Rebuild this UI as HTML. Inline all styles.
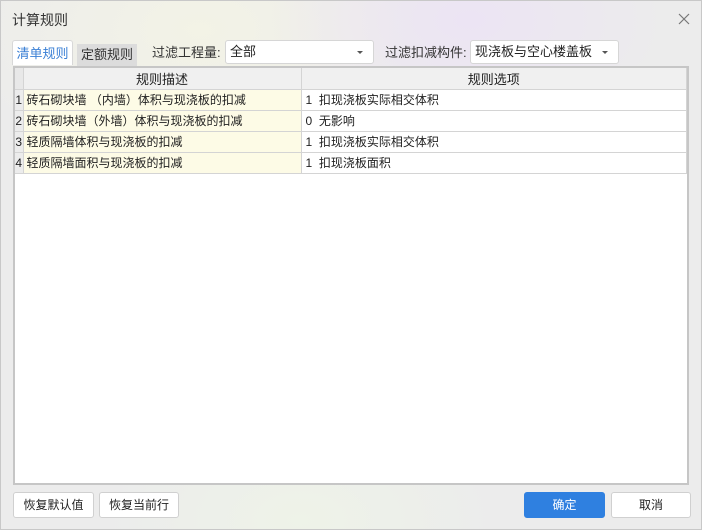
<!DOCTYPE html>
<html><head><meta charset="utf-8"><style>
*{box-sizing:border-box;margin:0;padding:0}
body{width:702px;height:530px;overflow:hidden;font-family:"Liberation Sans","Noto Sans CJK SC",sans-serif;font-size:12px;color:#222;position:relative;
background:radial-gradient(ellipse 200px 120px at 470px 20px,#ece4f4,transparent),radial-gradient(ellipse 250px 150px at 200px 30px,#f3f3e6,transparent),radial-gradient(ellipse 200px 120px at 300px 520px,#eef3e8,transparent),#ececec;border:1px solid #c8c8c8}
.abs{position:absolute}
.title{left:11px;top:9px;font-size:14px;color:#333}
.close{right:11px;top:12px}
.tab{top:39px;height:25px;line-height:25px;text-align:center;font-size:13px}
.sel{height:24px;background:#fff;border:1px solid #d6d6d6;border-radius:3px;top:39px;line-height:22px;padding-left:4px;font-size:13px}
.sel:after{content:"";position:absolute;right:10px;top:10px;border:3px solid transparent;border-top:3px solid #555}
.lbl{top:41px;font-size:13px;color:#333}
.grid{left:12px;top:65px;width:676px;height:419px;background:#fff;border:2px solid #c6c6c6}
table{border-collapse:collapse;width:672px;font-size:12px}
td{height:21px;border-bottom:1px solid #d4d4d4;border-right:1px solid #d4d4d4;white-space:nowrap}
th{height:21px;font-weight:normal;font-size:13px;background:#f0f0f0;border-right:1px solid #d4d4d4;border-bottom:1px solid #d4d4d4}
.n{width:8px;background:#ececec;font-size:12px;text-align:center;padding:0}
.d{width:278px;background:#fdfbe6;padding-left:3px}
.o{padding-left:4px}
.btn{top:491px;height:26px;background:#fff;border:1px solid #d0d0d0;border-radius:3px;text-align:center;line-height:24px;font-size:12px}
</style></head><body>
<div class="abs title">计算规则</div>
<svg class="abs close" width="12" height="12" viewBox="0 0 12 12"><path d="M1 1L11 11M11 1L1 11" stroke="#777" stroke-width="1.2"/></svg>
<div class="abs tab" style="left:11px;width:61px;background:#fff;border:1px solid #d8d8d8;border-bottom:none;color:#3a7fd5;border-radius:3px 3px 0 0">清单规则</div>
<div class="abs tab" style="left:76px;width:60px;top:43px;height:22px;line-height:22px;background:#dcdcdc;color:#333">定额规则</div>
<div class="abs lbl" style="left:151px">过滤工程量:</div>
<div class="abs sel" style="left:224px;width:149px">全部</div>
<div class="abs lbl" style="left:384px">过滤扣减构件:</div>
<div class="abs sel" style="left:469px;width:149px">现浇板与空心楼盖板</div>
<div class="abs grid"><table>
<tr><th class="n" style="background:#e8e8e8"></th><th>规则描述</th><th>规则选项</th></tr>
<tr><td class="n">1</td><td class="d">砖石砌块墙 （内墙）体积与现浇板的扣减</td><td class="o">1&nbsp; 扣现浇板实际相交体积</td></tr>
<tr><td class="n">2</td><td class="d">砖石砌块墙（外墙）体积与现浇板的扣减</td><td class="o">0&nbsp; 无影响</td></tr>
<tr><td class="n">3</td><td class="d">轻质隔墙体积与现浇板的扣减</td><td class="o">1&nbsp; 扣现浇板实际相交体积</td></tr>
<tr><td class="n">4</td><td class="d">轻质隔墙面积与现浇板的扣减</td><td class="o">1&nbsp; 扣现浇板面积</td></tr>
</table></div>
<div class="abs btn" style="left:12px;width:81px">恢复默认值</div>
<div class="abs btn" style="left:98px;width:80px">恢复当前行</div>
<div class="abs btn" style="left:523px;width:81px;background:#2f80e0;border-color:#2f80e0;color:#fff">确定</div>
<div class="abs btn" style="left:610px;width:80px">取消</div>
</body></html>
